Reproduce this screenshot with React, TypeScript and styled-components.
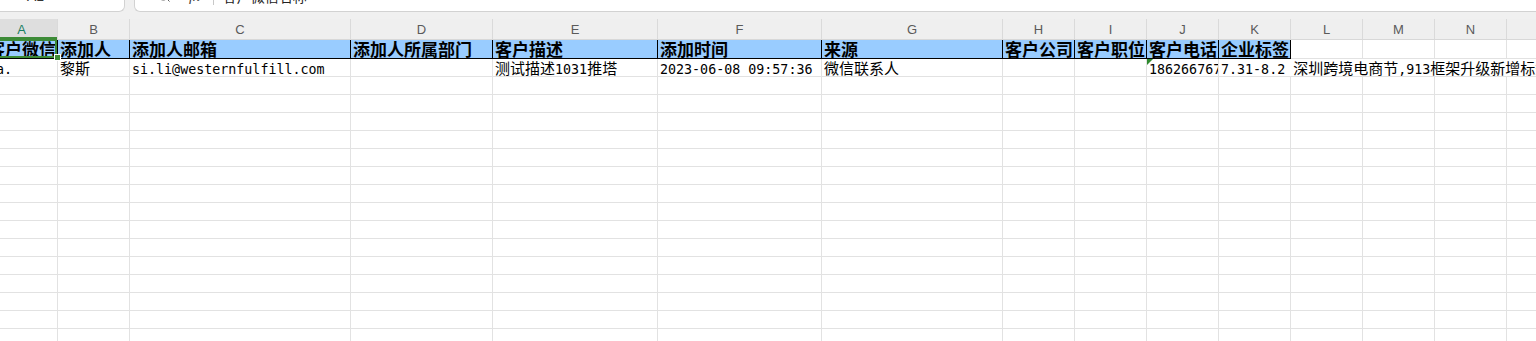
import React from "react";
import styled, { createGlobalStyle } from "styled-components";
import { Search } from "lucide-react";

const GlobalStyle = createGlobalStyle`
  html, body {
    margin: 0;
    padding: 0;
    background: #ffffff;
    overflow: hidden;
  }
`;

const COLUMNS = [
  { key: "A", width: 72 },
  { key: "B", width: 72 },
  { key: "C", width: 221 },
  { key: "D", width: 142 },
  { key: "E", width: 165 },
  { key: "F", width: 164 },
  { key: "G", width: 181 },
  { key: "H", width: 72 },
  { key: "I", width: 72 },
  { key: "J", width: 72 },
  { key: "K", width: 72 },
  { key: "L", width: 72 },
  { key: "M", width: 72 },
  { key: "N", width: 72 },
  { key: "O", width: 72 },
];

const GRID = COLUMNS.map((c) => `${c.width}px`).join(" ");

const HEADERS = [
  "客户微信名称",
  "添加人",
  "添加人邮箱",
  "添加人所属部门",
  "客户描述",
  "添加时间",
  "来源",
  "客户公司",
  "客户职位",
  "客户电话",
  "企业标签",
];

const RECORD = [
  "Na.",
  "黎斯",
  "si.li@westernfulfill.com",
  "",
  "测试描述1031推塔",
  "2023-06-08 09:57:36",
  "微信联系人",
  "",
  "",
  "18626676767",
];
const TAGS = "7.31-8.2 深圳跨境电商节,913框架升级新增标签";

const EMPTY_ROWS = 15;
const GREEN = "#3d8b37";
const GRIDLINE = "#e2e2e2";

const Page = styled.div`
  width: 1536px;
  height: 341px;
  overflow: hidden;
  background: #ffffff;
`;

const FormulaArea = styled.div`
  height: 19px;
  background: #f0f0f0;
`;

const FormulaClip = styled.div`
  height: 12px;
  overflow: hidden;
  display: flex;
  align-items: flex-end;
  gap: 9px;
`;

const NameBox = styled.div`
  flex: 0 0 125px;
  height: 29px;
  box-sizing: border-box;
  background: #ffffff;
  border-right: 1px solid #d2d2d2;
  border-bottom: 1px solid #d2d2d2;
  border-bottom-right-radius: 6px;
  display: flex;
  align-items: center;
  padding: 0 0 2px 27px;
  font: 14px "Liberation Sans", Arial, sans-serif;
  color: #333333;
`;

const FormulaBox = styled.div`
  flex: 1;
  height: 29px;
  box-sizing: border-box;
  background: #ffffff;
  border-left: 1px solid #d2d2d2;
  border-bottom: 1px solid #d2d2d2;
  border-bottom-left-radius: 6px;
  display: flex;
  align-items: center;
  padding: 0 0 2px 22px;
  color: #555555;
`;

const Fx = styled.span`
  margin-left: 18px;
  font: italic 15px "Liberation Serif", serif;
  color: #444444;
`;

const Divider = styled.span`
  width: 1px;
  height: 18px;
  margin: 0 9px 0 13px;
  background: #c8c8c8;
`;

const FormulaText = styled.span`
  font: 14px "Noto Sans CJK SC", sans-serif;
  color: #222222;
`;

const Sheet = styled.div`
  margin-left: -14px;
  width: 1600px;
`;

const ColumnHeader = styled.div`
  display: grid;
  grid-template-columns: ${GRID};
  height: 21px;
  box-sizing: border-box;
  background: #efefef;
  border-bottom: 1px solid #d8d8d8;
`;

const ColumnLetter = styled.div<{ $active?: boolean }>`
  display: flex;
  align-items: center;
  justify-content: center;
  border-right: 1px solid #dadada;
  font: 13px "Liberation Sans", Arial, sans-serif;
  color: ${(p) => (p.$active ? "#1b7f62" : "#5a5a5a")};
  background: ${(p) => (p.$active ? "#dedede" : "transparent")};
  box-shadow: ${(p) => (p.$active ? `inset 0 -2px 0 ${GREEN}` : "none")};
`;

const Row = styled.div<{ $height: number }>`
  display: grid;
  grid-template-columns: ${GRID};
  height: ${(p) => p.$height}px;
`;

const Cell = styled.div<{ $title?: boolean; $span?: number }>`
  position: relative;
  box-sizing: border-box;
  overflow: hidden;
  white-space: pre;
  padding-left: 2px;
  grid-column: span ${(p) => p.$span ?? 1};
  background: ${(p) => (p.$title ? "#99ccff" : "#ffffff")};
  border-right: 1px solid ${(p) => (p.$title ? "#000000" : p.$span ? "transparent" : GRIDLINE)};
  border-bottom: 1px solid ${(p) => (p.$title ? "#000000" : GRIDLINE)};
  font-family: "Noto Sans CJK SC", sans-serif;
  font-size: ${(p) => (p.$title ? "17px" : "15px")};
  font-weight: ${(p) => (p.$title ? 700 : 400)};
  line-height: ${(p) => (p.$title ? "18px" : "17px")};
  color: #000000;
`;

const SelectedCell = styled(Cell)`
  overflow: visible;

  & > .clip {
    display: block;
    overflow: hidden;
    width: 68px;
  }

  &::after {
    content: "";
    position: absolute;
    top: -1px;
    right: 0;
    bottom: 0;
    left: -2px;
    border: 2px solid ${GREEN};
    pointer-events: none;
  }
`;

const Handle = styled.span`
  position: absolute;
  right: -3px;
  bottom: -2px;
  width: 5px;
  height: 5px;
  background: ${GREEN};
  box-shadow: 0 0 0 1px #ffffff;
  z-index: 2;
`;

const NumberAsText = styled(Cell)`
  &::before {
    content: "";
    position: absolute;
    top: 0;
    left: 0;
    border-top: 6px solid #2f8a2f;
    border-right: 6px solid transparent;
  }
`;

const Half = styled.span`
  font-family: "DejaVu Sans Mono", "Liberation Mono", monospace;
  font-size: 13.33px;
  font-weight: 400;
`;

const WIDE = /([\u2e80-\u9fff\uff00-\uffef]+)/;

const CellText = ({ text }: { text: string }) => (
  <>
    {text
      .split(WIDE)
      .filter(Boolean)
      .map((run, i) =>
        WIDE.test(run) ? <span key={i}>{run}</span> : <Half key={i}>{run}</Half>
      )}
  </>
);

const App = () => {
  return (
    <Page>
      <GlobalStyle />
      <FormulaArea>
        <FormulaClip>
          <NameBox>A1</NameBox>
          <FormulaBox>
            <Search size={14} strokeWidth={1.6} />
            <Fx>fx</Fx>
            <Divider />
            <FormulaText>客户微信名称</FormulaText>
          </FormulaBox>
        </FormulaClip>
      </FormulaArea>

      <Sheet>
        <ColumnHeader>
          {COLUMNS.map((c) => (
            <ColumnLetter key={c.key} $active={c.key === "A"}>
              {c.key}
            </ColumnLetter>
          ))}
        </ColumnHeader>

        <Row $height={19}>
          {COLUMNS.map((c, i) =>
            i === 0 ? (
              <SelectedCell key={c.key} $title>
                <span className="clip">
                  <CellText text={HEADERS[0]} />
                </span>
                <Handle />
              </SelectedCell>
            ) : (
              <Cell key={c.key} $title={i < HEADERS.length}>
                {HEADERS[i] && <CellText text={HEADERS[i]} />}
              </Cell>
            )
          )}
        </Row>

        <Row $height={18}>
          {RECORD.map((value, i) =>
            i === 9 ? (
              <NumberAsText key={i}>
                <CellText text={value} />
              </NumberAsText>
            ) : (
              <Cell key={i}>{value && <CellText text={value} />}</Cell>
            )
          )}
          <Cell $span={5}>
            <CellText text={TAGS} />
          </Cell>
        </Row>

        {Array.from({ length: EMPTY_ROWS }).map((_, r) => (
          <Row key={r} $height={18}>
            {COLUMNS.map((c) => (
              <Cell key={c.key} />
            ))}
          </Row>
        ))}
      </Sheet>
    </Page>
  );
};

export default App;
